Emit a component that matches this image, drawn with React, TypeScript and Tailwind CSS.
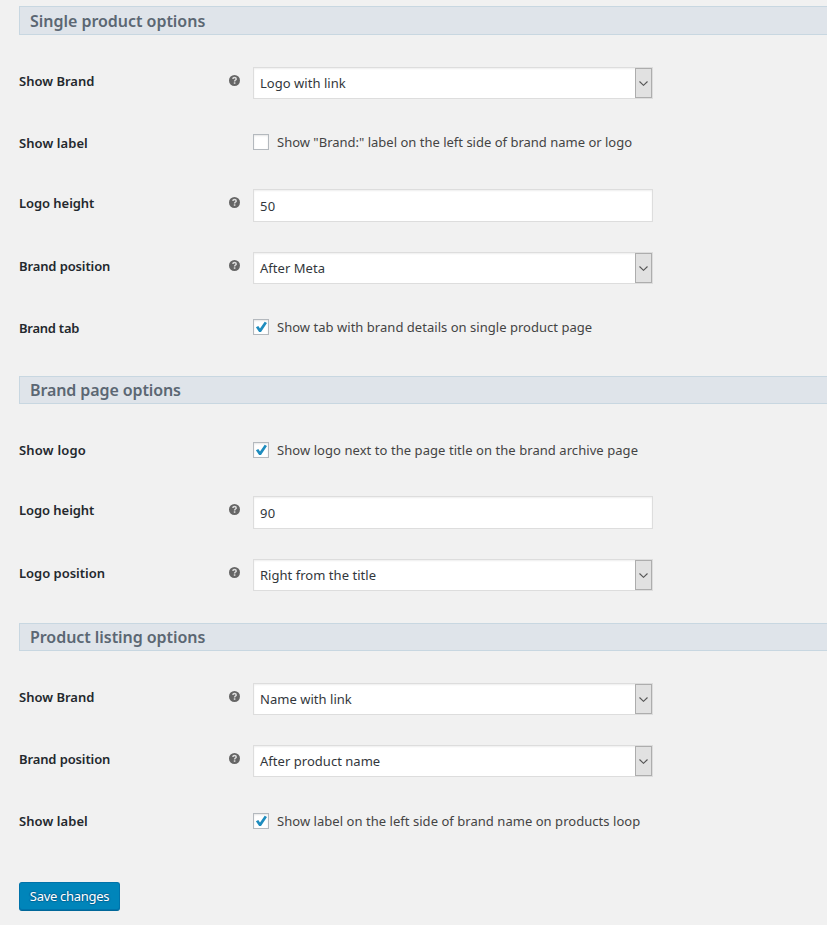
import React from 'react';

const HelpIcon = () => (
  <svg className="block size-[11px]" viewBox="0 0 11 11" aria-label="Help">
    <circle cx="5.5" cy="5.5" r="5.5" fill="#666" />
    <path d="M3.9 4.1C3.9 3 4.5 2.5 5.5 2.5S7.2 3 7.2 3.9C7.2 5.1 5.6 5 5.6 6.6" fill="none" stroke="#dedede" strokeWidth="1.5" />
    <rect x="4.8" y="7.3" width="1.6" height="1.5" fill="#dedede" />
  </svg>
);

const Heading = ({ children, className }: { children: string; className: string }) => (
  <h2 className={`flex items-center border border-r-0 border-[#c8d7e1] bg-[#dfe4ea] pl-[10px] text-[16px] font-semibold text-[#5b6773] ${className}`}>
    <span className="whitespace-nowrap">{children}</span>
  </h2>
);

type RowProps = { label: string; help?: boolean; height: string; tracking?: string; children: React.ReactNode };

const Row = ({ label, help, height, tracking = 'tracking-[-0.12px]', children }: RowProps) => (
  <div className={`flex items-start ${height}`}>
    <div className={`w-[210px] pt-[19px] text-[13px] leading-5 font-semibold whitespace-nowrap text-[#23282d] ${tracking}`}>{label}</div>
    <div className="w-6 pt-[23px]">{help && <HelpIcon />}</div>
    {children}
  </div>
);

const Select = ({ value }: { value: string }) => (
  <div className="mt-[15px] flex h-8 w-[400px] border border-[#ddd] bg-white shadow-[inset_0_1px_2px_rgba(0,0,0,0.07)]">
    <span className="flex-1 pt-[5px] pl-[6px] text-[13px] leading-5 tracking-[0.03px] whitespace-nowrap text-[#32373c]">{value}</span>
    <span className="flex h-[30px] w-[17px] items-center justify-center border border-[#adadad] bg-[#e1e1e1]">
      <svg className="h-[5px] w-[9px]" viewBox="0 0 9 5">
        <path d="M.5.5 4.5 4.3 8.5.5" fill="none" stroke="#555" strokeWidth="1.1" />
      </svg>
    </span>
  </div>
);

const Field = ({ value }: { value: string }) => (
  <div className="mt-[15px] h-[33px] w-[400px] border border-[#ddd] bg-white pt-[6px] pl-[6px] text-[13px] leading-5 tracking-[0.3px] text-[#32373c] shadow-[inset_0_1px_2px_rgba(0,0,0,0.07)]">{value}</div>
);

const Check = ({ text, checked, className }: { text: string; checked?: boolean; className: string }) => (
  <div className={`flex items-start ${className}`}>
    <span className="flex size-4 items-center justify-center border border-[#b4b9be] bg-white shadow-[inset_0_1px_2px_rgba(0,0,0,0.1)]">
      {checked && (
        <svg className="size-[14px]" viewBox="0 0 14 14">
          <path d="M1.9 7.3 4.3 6 6 8.4 10.7 1.8 13 3 7 12.1H5.1Z" fill="#1e8cbe" />
        </svg>
      )}
    </span>
    <span className="-mt-[2px] ml-2 text-[13px] leading-5 whitespace-nowrap text-[#444]">{text}</span>
  </div>
);

export default function App() {
  return (
    <main className="h-[925px] w-[827px] overflow-hidden bg-[#f1f1f1] pt-[6px] pl-[19px] font-['Noto_Sans','Open_Sans',sans-serif]">
      <section>
        <Heading className="h-[29px] tracking-[-0.03px]">Single product options</Heading>
        <div className="py-[17px]">
          <Row label="Show Brand" tracking="tracking-normal" help height="h-[62px]"><Select value="Logo with link" /></Row>
          <Row label="Show label" tracking="tracking-[0.08px]" height="h-[60px]"><Check className="pt-5" text={'Show "Brand:" label on the left side of brand name or logo'} /></Row>
          <Row label="Logo height" tracking="tracking-[-0.06px]" help height="h-[63px]"><Field value="50" /></Row>
          <Row label="Brand position" help height="h-[62px]"><Select value="After Meta" /></Row>
          <Row label="Brand tab" tracking="tracking-[-0.25px]" height="h-[60px]"><Check className="pt-5 tracking-[0.03px]" checked text="Show tab with brand details on single product page" /></Row>
        </div>
      </section>
      <section>
        <Heading className="h-[28px] tracking-[-0.1px]">Brand page options</Heading>
        <div className="py-[17px]">
          <Row label="Show logo" tracking="tracking-[0.2px]" height="h-[60px]"><Check className="pt-[21px] tracking-[0.06px]" checked text="Show logo next to the page title on the brand archive page" /></Row>
          <Row label="Logo height" tracking="tracking-[-0.06px]" help height="h-[63px]"><Field value="90" /></Row>
          <Row label="Logo position" tracking="tracking-[-0.02px]" help height="h-[62px]"><Select value="Right from the title" /></Row>
        </div>
      </section>
      <section>
        <Heading className="h-[28px] tracking-[-0.05px]">Product listing options</Heading>
        <div className="pt-[17px]">
          <Row label="Show Brand" tracking="tracking-normal" help height="h-[62px]"><Select value="Name with link" /></Row>
          <Row label="Brand position" help height="h-[62px]"><Select value="After product name" /></Row>
          <Row label="Show label" tracking="tracking-[0.08px]" height="h-[60px]"><Check className="pt-[21px] tracking-[0.04px]" checked text="Show label on the left side of brand name on products loop" /></Row>
        </div>
      </section>
      <button className="mt-[30px] block h-[29px] w-[101px] rounded-[3px] border border-[#0073aa] border-b-[#006799] bg-[#0085ba] pb-px text-[13px] leading-[26px] tracking-[-0.3px] whitespace-nowrap text-white shadow-[inset_0_-1px_0_#0073aa] [text-shadow:0_-1px_1px_#006799,1px_0_1px_#006799,0_1px_1px_#006799,-1px_0_1px_#006799]">
        Save changes
      </button>
    </main>
  );
}
